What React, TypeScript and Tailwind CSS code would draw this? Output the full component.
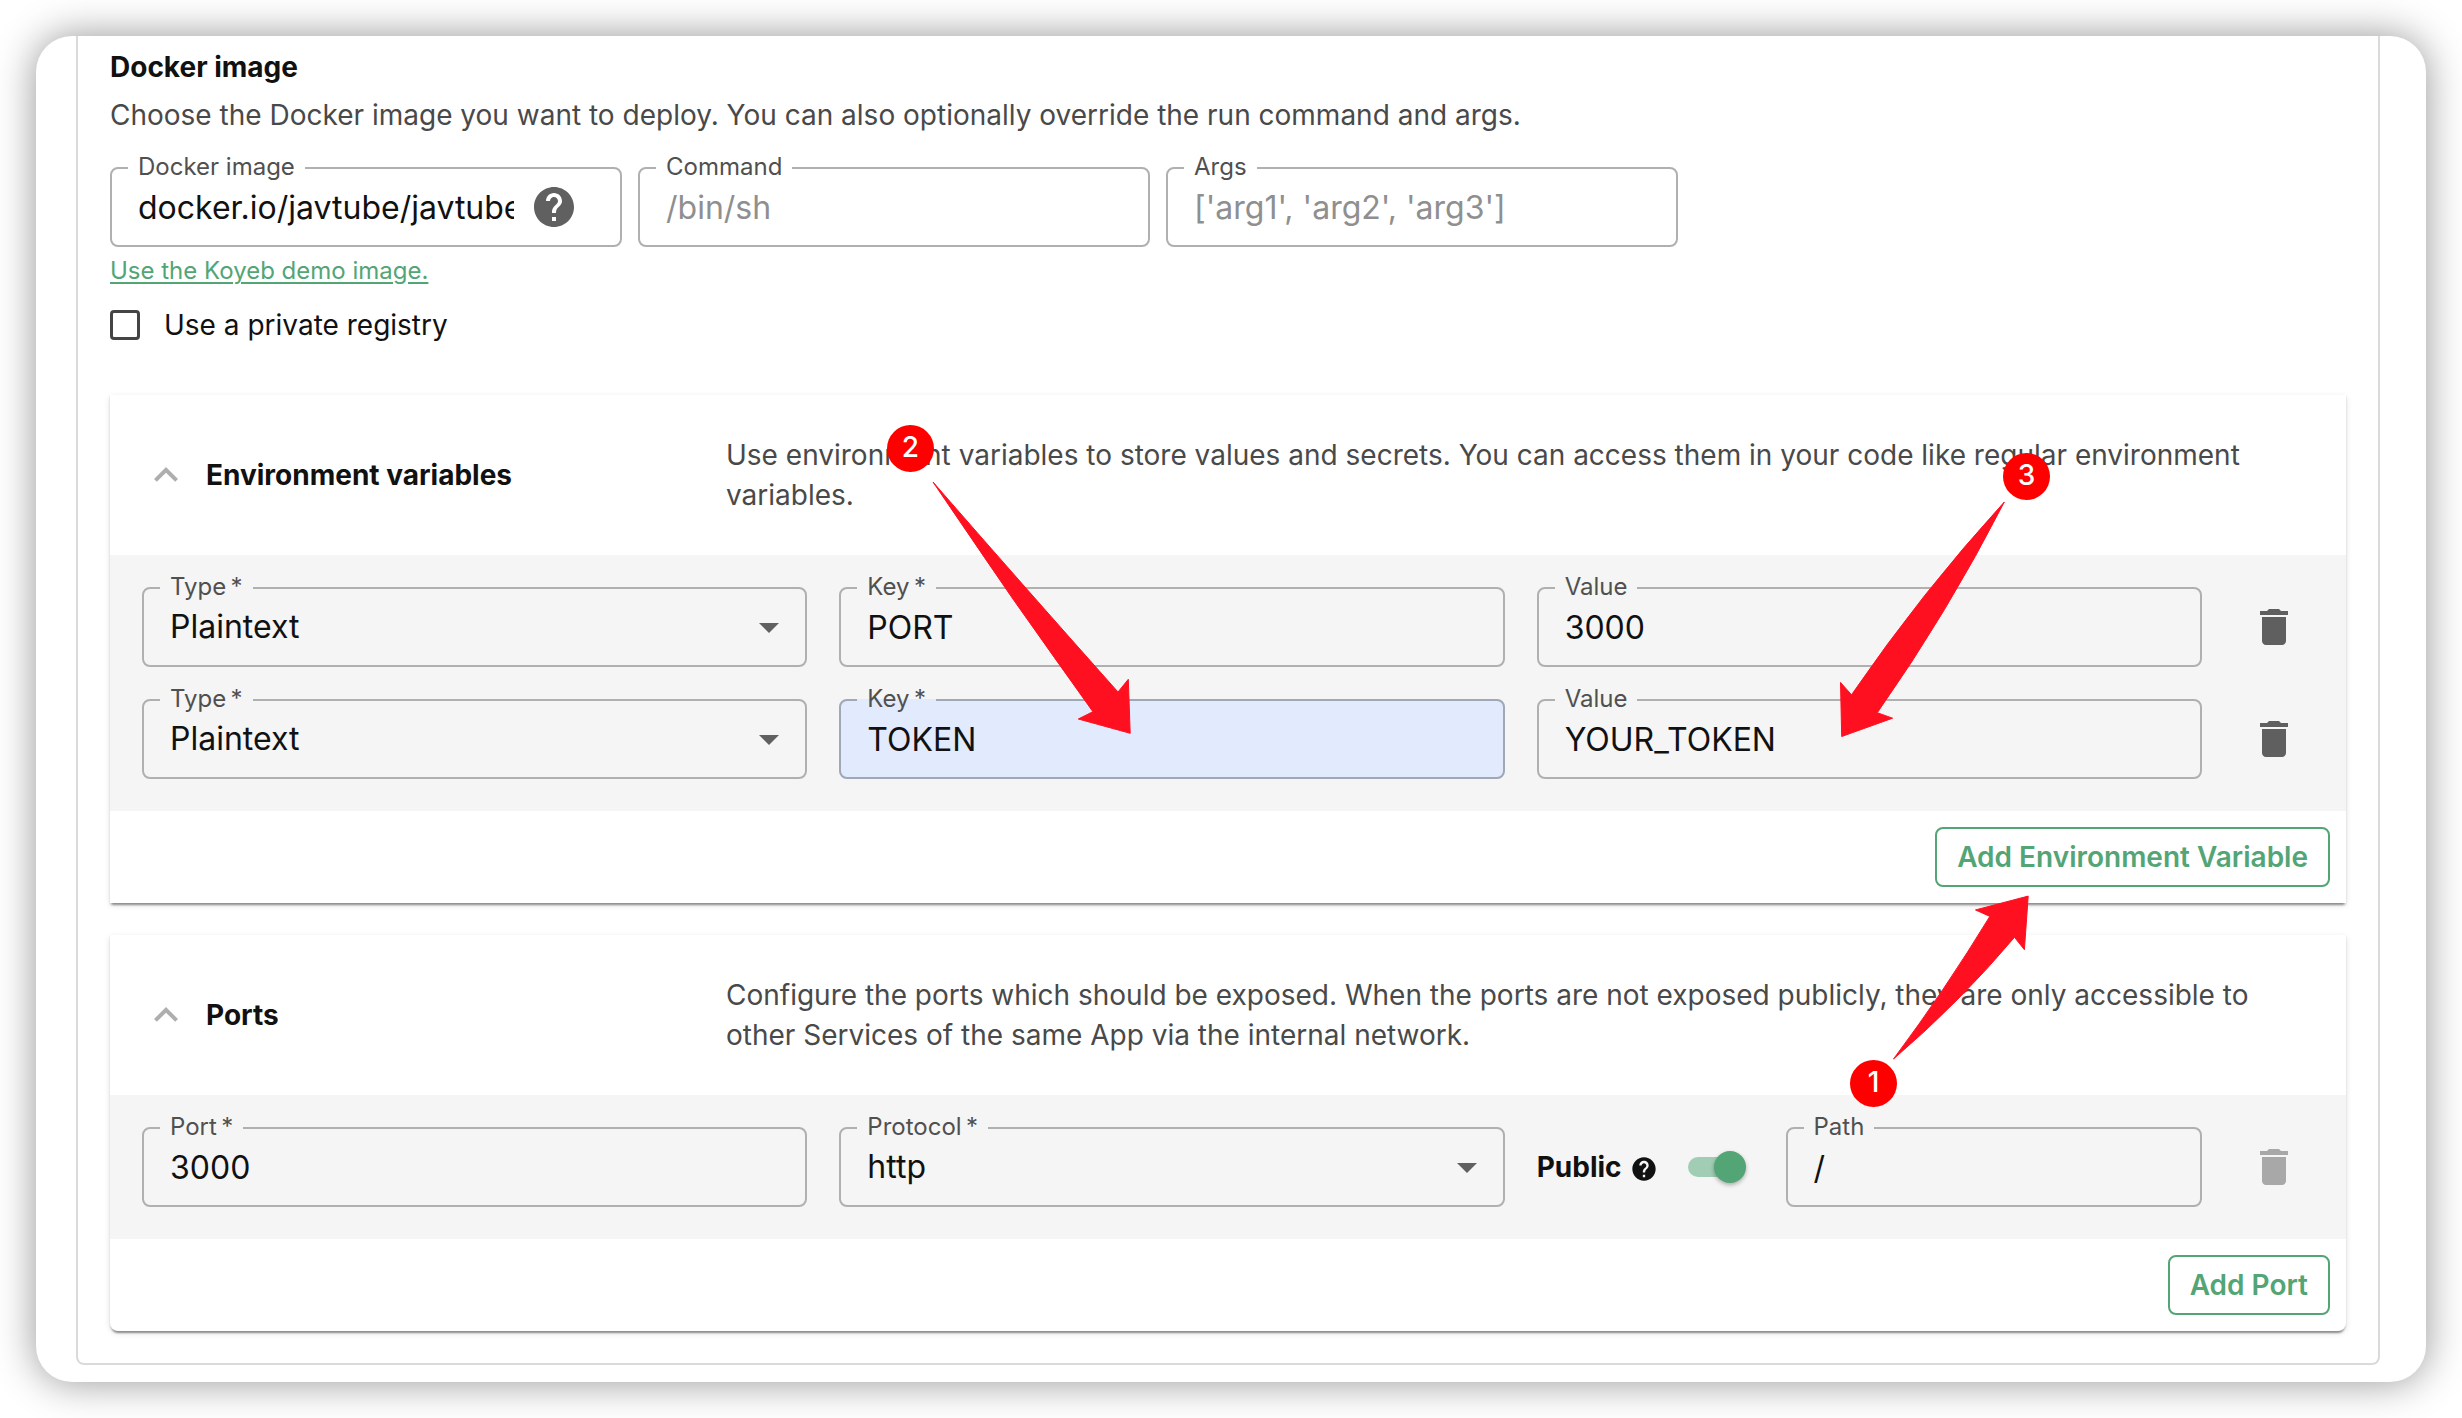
import { useId } from 'react';
import type { ReactNode } from 'react';
import { MdArrowDropDown, MdDelete, MdExpandLess, MdHelp } from 'react-icons/md';

const envVars = [
  { id: 1, type: 'Plaintext', key: 'PORT', value: '3000', autofilled: false },
  { id: 2, type: 'Plaintext', key: 'TOKEN', value: 'YOUR_TOKEN', autofilled: true },
];

type FieldProps = {
  label: string;
  required?: boolean;
  autofilled?: boolean;
  className?: string;
  id: string;
  children: ReactNode;
};

// Outlined field, the label sits in a notch of the top border
function Field({ label, required, autofilled, className = 'flex-1', id, children }: FieldProps) {
  return (
    <fieldset
      className={`min-w-0 rounded-lg border-2 ${autofilled ? 'border-[#a0a7b6] bg-[#e2eafe]' : 'border-[#b0b0b0]'} ${className}`}
    >
      <legend className="ml-4 h-0.5 px-[10px] text-2xl leading-0 text-[#505050]">
        <label htmlFor={id}>
          {label}
          {required && <span>&thinsp;*</span>}
        </label>
      </legend>
      <div className="flex h-[76px] items-center">{children}</div>
    </fieldset>
  );
}

type TextFieldProps = {
  label: string;
  value?: string;
  placeholder?: string;
  required?: boolean;
  autofilled?: boolean;
  className?: string;
  adornment?: ReactNode;
};

function TextField({ label, value, placeholder, required, autofilled, className, adornment }: TextFieldProps) {
  const id = useId();
  return (
    <Field id={id} label={label} required={required} autofilled={autofilled} className={className}>
      <input
        id={id}
        type="text"
        defaultValue={value}
        placeholder={placeholder}
        className={`ml-[26px] h-full min-w-0 flex-1 bg-transparent text-[32px] outline-none placeholder:text-[#8f8f8f] ${adornment ? 'mr-4' : 'mr-[26px]'}`}
      />
      {adornment}
    </Field>
  );
}

function SelectField({ label, options }: { label: string; options: string[] }) {
  const id = useId();
  return (
    <Field id={id} label={label} required>
      <div className="grid h-full w-full items-center">
        <select
          id={id}
          className="col-start-1 row-start-1 h-full w-full appearance-none bg-transparent pl-[26px] text-[32px] outline-none"
        >
          {options.map((option) => (
            <option key={option}>{option}</option>
          ))}
        </select>
        <MdArrowDropDown className="pointer-events-none col-start-1 row-start-1 mr-3 size-12 justify-self-end text-[#606060]" />
      </div>
    </Field>
  );
}

function DeleteButton({ disabled }: { disabled?: boolean }) {
  return (
    <button
      type="button"
      aria-label="Delete"
      disabled={disabled}
      className="flex size-20 items-center justify-center text-[#5f5f5f] disabled:text-[#a8a8a8]"
    >
      <MdDelete className="size-12" />
    </button>
  );
}

// Three equal fields and the delete button
function Row({ children }: { children: ReactNode }) {
  return <div className="grid grid-cols-[repeat(3,minmax(0,1fr))_80px] gap-8">{children}</div>;
}

type PanelProps = {
  title: string;
  description: string;
  action: string;
  className?: string;
  children: ReactNode;
};

function Panel({ title, description, action, className = '', children }: PanelProps) {
  return (
    <section
      className={`bg-white shadow-[0_4px_2px_-2px_rgba(0,0,0,0.3),0_2px_2px_0_rgba(0,0,0,0.14),0_2px_6px_0_rgba(0,0,0,0.12)] ${className}`}
    >
      <header className="flex items-center gap-4 py-10 pr-15 pl-8">
        <button type="button" aria-label={`Collapse ${title}`} className="shrink-0 text-[#aeaeae]">
          <MdExpandLess className="size-12" />
        </button>
        <div className="grid flex-1 grid-cols-4 items-center">
          <h3 className="text-[28px] leading-10 font-bold">{title}</h3>
          <p className="col-span-3 text-[28px] leading-10 text-[#494949]">{description}</p>
        </div>
      </header>
      <div className="flex flex-col gap-8 bg-[#f5f5f5] p-8">{children}</div>
      <footer className="flex justify-end p-4">
        <button
          type="button"
          className="rounded-lg border-2 border-[#53a576] px-5 py-2 text-[28px] leading-10 font-semibold text-[#53a576]"
        >
          {action}
        </button>
      </footer>
    </section>
  );
}

function Step({ number, className }: { number: number; className: string }) {
  return (
    <span
      className={`absolute flex size-[47px] items-center justify-center rounded-full bg-[#ff0000] pb-1 text-[28px] leading-none font-medium text-white ${className}`}
    >
      {number}
    </span>
  );
}

export default function App() {
  const registryId = useId();
  const publicId = useId();

  return (
    <div className="relative bg-white p-9 font-['Inter',sans-serif] text-[#111111]">
      <main className="rounded-[36px] bg-white pr-[46px] pb-[17px] pl-10 shadow-[0_0_40px_rgba(0,0,0,0.42)]">
        <div className="rounded-b-lg border-2 border-t-0 border-[#dadada] px-8 pt-[11px] pb-8">
          <h2 className="text-[28px] leading-10 font-bold">Docker image</h2>
          <p className="mt-2 text-[28px] leading-10 text-[#494949]">
            Choose the Docker image you want to deploy. You can also optionally override the run command and args.
          </p>

          <div className="mt-8 flex gap-4">
            <TextField
              label="Docker image"
              value="docker.io/javtube/javtube"
              className="w-[512px]"
              adornment={<MdHelp className="mr-[42px] size-12 shrink-0 text-[#606060]" />}
            />
            <TextField label="Command" placeholder="/bin/sh" className="w-[512px]" />
            <TextField label="Args" placeholder="['arg1', 'arg2', 'arg3']" className="w-[512px]" />
          </div>

          <a href="#demo" className="mt-2 block w-fit text-2xl leading-8 text-[#53a576] underline decoration-2 underline-offset-3">
            Use the Koyeb demo image.
          </a>

          <div className="mt-[18px] mb-[50px] flex items-center gap-6">
            <input
              id={registryId}
              type="checkbox"
              className="size-[30px] appearance-none rounded-sm border-3 border-[#444444] checked:bg-[#53a576]"
            />
            <label htmlFor={registryId} className="text-[28px] leading-10">
              Use a private registry
            </label>
          </div>

          <div className="flex flex-col gap-8">
            <Panel
              title="Environment variables"
              description="Use environment variables to store values and secrets. You can access them in your code like regular environment variables."
              action="Add Environment Variable"
            >
              {envVars.map((item) => (
                <Row key={item.id}>
                  <SelectField label="Type" options={[item.type, 'Secret']} />
                  <TextField label="Key" value={item.key} required autofilled={item.autofilled} />
                  <TextField label="Value" value={item.value} />
                  <DeleteButton />
                </Row>
              ))}
            </Panel>

            <Panel
              className="rounded-b-lg"
              title="Ports"
              description="Configure the ports which should be exposed. When the ports are not exposed publicly, they are only accessible to other Services of the same App via the internal network."
              action="Add Port"
            >
              <Row>
                <TextField label="Port" value="3000" required />
                <SelectField label="Protocol" options={['http', 'http2', 'tcp']} />
                <div className="flex gap-8">
                  <div className="flex items-center">
                    <label htmlFor={publicId} className="flex items-center gap-2 text-[28px] leading-10 font-bold">
                      Public
                      <MdHelp className="box-content size-7 pt-1" />
                    </label>
                    <div className="ml-[30px] flex w-[66px] items-center">
                      <input
                        id={publicId}
                        type="checkbox"
                        role="switch"
                        defaultChecked
                        className="flex h-5 w-[52px] appearance-none items-center rounded-full bg-[#a0cdb3] before:size-8 before:shrink-0 before:rounded-full before:bg-white before:shadow-[0_2px_4px_rgba(0,0,0,0.3)] checked:before:ml-[26px] checked:before:bg-[#53a576]"
                      />
                    </div>
                  </div>
                  <TextField label="Path" value="/" />
                </div>
                <DeleteButton disabled />
              </Row>
            </Panel>
          </div>
        </div>
      </main>

      {/* Walkthrough arrows and step numbers */}
      <svg className="pointer-events-none absolute top-[480px] left-[930px] h-[256px] w-[203px]" viewBox="930 480 203 256" fill="#ff1020" stroke="#ff1020" strokeLinejoin="round">
        <path d="M933 482 Q1020 582 1118 692 L1128.3 679.3 L1130.2 733.3 L1078.3 719 L1092.9 711.7 Q1010 597 933 482Z" />
      </svg>
      <svg className="pointer-events-none absolute top-[500px] left-[1838px] h-[240px] w-[170px]" viewBox="1838 500 170 240" fill="#ff1020" stroke="#ff1020" strokeLinejoin="round">
        <path d="M2004.3 502 Q1922 592 1851.5 694.8 L1840.5 682.4 L1841.7 736.5 L1892.6 718.2 L1877.3 712.7 Q1948 612 2004.3 502Z" />
      </svg>
      <svg className="pointer-events-none absolute top-[894px] left-[1890px] h-[168px] w-[142px]" viewBox="1890 894 142 168" fill="#ff1020" stroke="#ff1020" strokeLinejoin="round">
        <path d="M1893.5 1059 Q1945 990 1989.8 916.4 L1975.5 909.9 L2028.2 896.1 L2024.4 949.7 L2014.5 937.3 Q1960 1002 1893.5 1059Z" />
      </svg>
      <Step number={1} className="top-[1060px] left-[1850px]" />
      <Step number={2} className="top-[425px] left-[887px]" />
      <Step number={3} className="top-[453px] left-[2003px]" />
    </div>
  );
}
